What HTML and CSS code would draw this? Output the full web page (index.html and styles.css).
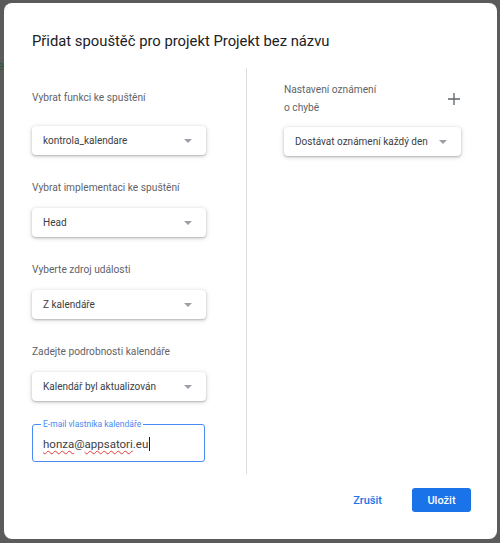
FILE: index.html
```html
<!DOCTYPE html>
<html lang="cs">
<head>
<meta charset="utf-8">
<link rel="stylesheet" href="styles.css">
</head>
<body>
<div class="backdrop-e">e</div>
<div class="dialog">
  <h1 class="title">Přidat spouštěč pro projekt Projekt bez názvu</h1>
  <div class="columns">
    <div class="col-left">
      <div class="field field-first">
        <div class="label">Vybrat funkci ke spuštění</div>
        <div class="select"><span>kontrola_kalendare</span><i class="arrow"></i></div>
      </div>
      <div class="field">
        <div class="label">Vybrat implementaci ke spuštění</div>
        <div class="select"><span>Head</span><i class="arrow"></i></div>
      </div>
      <div class="field">
        <div class="label">Vyberte zdroj události</div>
        <div class="select"><span>Z kalendáře</span><i class="arrow"></i></div>
      </div>
      <div class="field">
        <div class="label">Zadejte podrobnosti kalendáře</div>
        <div class="select"><span>Kalendář byl aktualizován</span><i class="arrow"></i></div>
      </div>
      <div class="input-box">
        <span class="float-label">E-mail vlastníka kalendáře</span>
        <span class="value"><span class="misspelled">honza</span>@<span class="misspelled">appsatori</span>.eu</span><span class="caret"></span>
      </div>
    </div>
    <div class="divider"></div>
    <div class="col-right">
      <div class="notif-head">
        <div class="notif-label">Nastavení oznámení<br>o chybě</div>
        <svg class="plus" width="12" height="12" viewBox="0 0 12 12"><path d="M6 0v12M0 6h12" stroke="#5f6368" stroke-width="1.3"/></svg>
      </div>
      <div class="select select-right"><span>Dostávat oznámení každý den</span><i class="arrow"></i></div>
    </div>
  </div>
  <div class="footer">
    <span class="btn-text">Zrušit</span>
    <span class="btn-primary">Uložit</span>
  </div>
</div>
</body>
</html>
```
FILE: styles.css
```css
* { box-sizing: border-box; }
html, body { margin: 0; padding: 0; }
body {
  width: 500px;
  height: 543px;
  background: #5b5b5b;
  font-family: Roboto, "Noto Sans", sans-serif;
  position: relative;
  overflow: hidden;
}
.backdrop-e {
  position: absolute;
  left: -3px;
  top: 58px;
  color: #2e5a3a;
  font-size: 13px;
}
.dialog {
  position: relative;
  margin: 3px 0 0 4px;
  width: 493px;
  height: 536px;
  background: #fff;
  border-radius: 8px;
  padding: 28px 0 0 28px;
  display: flex;
  flex-direction: column;
}
.title {
  margin: 0;
  font-size: 14.8px;
  font-weight: 400;
  color: #202124;
  line-height: 20px;
  letter-spacing: 0;
}
.columns {
  display: flex;
  margin-top: 17px;
  height: 406px;
}
.col-left {
  width: 214px;
  padding-top: 22px;
}
.divider {
  width: 1px;
  background: #dadce0;
  height: 406px;
}
.col-right {
  padding-left: 37px;
  padding-top: 13px;
  width: 216px;
}
.label {
  font-size: 10.2px;
  color: #5f6368;
  line-height: 16px;
  margin-bottom: 12px;
  white-space: nowrap;
}
.field { margin-bottom: 25px; }
.field-first .label { margin-bottom: 20px; }
.field:nth-child(4) { margin-bottom: 23px; }
.select {
  width: 174px;
  height: 29px;
  border-radius: 4px;
  box-shadow: 0 1px 2px rgba(60,64,67,.3), 0 1px 4px 1px rgba(60,64,67,.15);
  display: flex;
  align-items: center;
  justify-content: space-between;
  padding: 0 14px 0 11px;
  font-size: 10px;
  color: #3c4043;
  background: #fff;
  white-space: nowrap;
}
.arrow {
  width: 0; height: 0;
  border-left: 4px solid transparent;
  border-right: 4px solid transparent;
  border-top: 4px solid #9aa0a6;
}
.input-box {
  position: relative;
  width: 173px;
  height: 38px;
  border: 1px solid #4a8af4;
  border-radius: 3px;
  display: flex;
  align-items: center;
  padding: 2px 0 0 10px;
  font-size: 11.5px;
  color: #3c4043;
}
.float-label {
  position: absolute;
  left: 8px;
  top: -6px;
  background: #fff;
  padding: 0 2px;
  font-size: 8.5px;
  line-height: 10px;
  color: #4a8af4;
  white-space: nowrap;
}
.misspelled {
  text-decoration: underline wavy #e53935;
  text-decoration-thickness: 1px;
  text-underline-offset: 2px;
}
.caret {
  display: inline-block;
  width: 1px;
  height: 14px;
  background: #202124;
  margin-left: 1px;
}
.notif-head {
  display: flex;
  align-items: center;
  justify-content: space-between;
  width: 177px;
  padding-right: 1px;
}
.notif-label {
  font-size: 10.2px;
  color: #5f6368;
  line-height: 18px;
}
.select-right {
  width: 177px;
  margin-top: 10px;
}
.footer {
  display: flex;
  align-items: center;
  justify-content: flex-end;
  padding-right: 26px;
  margin-top: 14px;
}
.btn-text {
  font-size: 11px;
  font-weight: 500;
  color: #1a73e8;
  margin-right: 30px;
}
.btn-primary {
  width: 59px;
  height: 24px;
  background: #1a73e8;
  color: #fff;
  border-radius: 3px;
  font-size: 11px;
  font-weight: 500;
  display: flex;
  align-items: center;
  justify-content: center;
}
```
